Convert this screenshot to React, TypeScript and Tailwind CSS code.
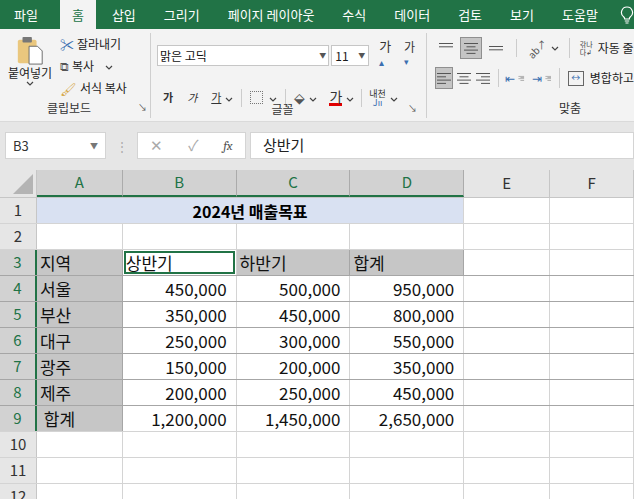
import React from 'react';

const font = { fontFamily: '"Malgun Gothic","Noto Sans CJK KR","Noto Sans",sans-serif' };

const tabs = ['파일', '홈', '삽입', '그리기', '페이지 레이아웃', '수식', '데이터', '검토', '보기', '도움말'];

const cols = [
  { k: 'A', w: 86 },
  { k: 'B', w: 114 },
  { k: 'C', w: 114 },
  { k: 'D', w: 114 },
  { k: 'E', w: 86 },
  { k: 'F', w: 84 },
];

const data: [string, string, string, string][] = [
  ['서울', '450,000', '500,000', '950,000'],
  ['부산', '350,000', '450,000', '800,000'],
  ['대구', '250,000', '300,000', '550,000'],
  ['광주', '150,000', '200,000', '350,000'],
  ['제주', '200,000', '250,000', '450,000'],
  [' 합계', '1,200,000', '1,450,000', '2,650,000'],
];

function Chevron() {
  return (
    <svg width="8" height="5" viewBox="0 0 8 5" className="inline-block">
      <path d="M1 1l3 3 3-3" stroke="#444" strokeWidth="1.2" fill="none" />
    </svg>
  );
}

function Lines({ kind }: { kind: 'l' | 'c' | 'r' | 'h' }) {
  const rows = kind === 'h' ? [0, 1] : [0, 1, 2, 3];
  return (
    <svg width="16" height="14" viewBox="0 0 16 14">
      {rows.map((i) => {
        const long = i % 2 === 0;
        const w = long ? 14 : 9;
        const x = kind === 'l' ? 1 : kind === 'r' ? 15 - w : (16 - w) / 2;
        return <rect key={i} x={kind === 'h' ? 1 : x} y={2 + i * 3.3} width={kind === 'h' ? 14 : w} height="1" fill="#555" />;
      })}
    </svg>
  );
}

function GroupLabel({ text, launcher }: { text: string; launcher?: boolean }) {
  return (
    <div className="h-[20px] flex items-center text-[12px] text-[#333] shrink-0">
      <span className="flex-1 text-center">{text}</span>
      {launcher && <span className="text-[9px] text-[#555] pr-[3px]">↘</span>}
    </div>
  );
}

function Ribbon() {
  return (
    <div className="h-[93px] bg-[#f3f3f3] flex border-b border-[#dadada] pt-[4px] pb-[3px]" style={font}>
      {/* clipboard */}
      <div className="w-[151px] flex flex-col border-r border-[#cfcfcf]">
        <div className="flex h-[66px] overflow-hidden">
          <div className="w-[60px] flex flex-col items-center pt-[2px]">
            <svg width="30" height="30" viewBox="0 0 30 32">
              <rect x="2" y="5" width="20" height="25" rx="2" fill="#eac77e" />
              <rect x="7" y="2" width="10" height="6" rx="1" fill="#777" />
              <path d="M14 12h9l5 5v14H14z" fill="#fff" stroke="#666" />
            </svg>
            <div className="text-[12px] text-[#222] leading-[16px]">붙여넣기</div>
            <Chevron />
          </div>
          <div className="flex flex-col text-[12px] text-[#222] pt-[2px] gap-[4px]">
            <div className="flex items-center gap-[3px]"><span className="text-[#3b6fb0] text-[14px] leading-none">✂</span>잘라내기</div>
            <div className="flex items-center gap-[3px]"><span className="text-[#555] text-[12px] leading-none">⧉</span>복사 <span className="ml-2"><Chevron /></span></div>
            <div className="flex items-center gap-[3px]"><span className="text-[#d6a84a] text-[13px] leading-none">🖌</span>서식 복사</div>
          </div>
        </div>
        <div className="mt-auto"><GroupLabel text="클립보드" launcher /></div>
      </div>
      {/* font */}
      <div className="w-[276px] flex flex-col border-r border-[#cfcfcf] px-[6px]">
        <div className="h-[66px]">
          <div className="flex items-center gap-[2px] pt-[3px]">
            <div className="w-[173px] h-[21px] bg-white border border-[#c6c6c6] flex items-center px-[2px] text-[12px] text-[#111]">
              <span className="flex-1">맑은 고딕</span>
              <span className="text-[7px] text-[#555]">▼</span>
            </div>
            <div className="w-[38px] h-[21px] bg-white border border-[#c6c6c6] flex items-center px-[3px] text-[12px]">
              <span className="flex-1 text-[#1a1a1a]">11</span>
              <span className="text-[7px] text-[#555]">▼</span>
            </div>
            <span className="ml-[8px] text-[13px] text-[#333]">가<sup className="text-[#3b6fb0]">▴</sup></span>
            <span className="ml-[6px] text-[12px] text-[#333]">가<sup className="text-[#3b6fb0]">▾</sup></span>
          </div>
          <div className="flex items-center pt-[9px] text-[11px] text-[#333] h-[36px]">
            <span className="ml-[6px] font-bold">가</span>
            <span className="ml-[14px] italic">가</span>
            <span className="ml-[14px] underline">가</span>
            <span className="ml-[4px]"><Chevron /></span>
            <span className="w-px h-[18px] bg-[#ccc] mx-[8px]" />
            <span className="w-[13px] h-[13px] border border-dotted border-[#777]" />
            <span className="ml-[6px]"><Chevron /></span>
            <span className="w-px h-[18px] bg-[#ccc] mx-[8px]" />
            <span className="text-[14px] text-[#555]">⬙</span>
            <span className="ml-[4px]"><Chevron /></span>
            <span className="ml-[12px] text-[14px] border-b-[3px] border-[#e00000] leading-[14px]">가</span>
            <span className="ml-[4px]"><Chevron /></span>
            <span className="w-px h-[18px] bg-[#ccc] mx-[7px]" />
            <span className="text-[9px] leading-[9px] text-center">내천<br /><span className="text-[#3b6fb0]">Jıı</span></span>
            <span className="ml-[4px]"><Chevron /></span>
          </div>
        </div>
        <div className="mt-auto"><GroupLabel text="글꼴" launcher /></div>
      </div>
      {/* alignment */}
      <div className="flex-1 flex flex-col pl-[8px] overflow-hidden">
        <div className="h-[66px]">
          <div className="flex items-center pt-[4px] gap-[3px]">
            <span className="w-[22px] h-[22px] flex items-center justify-center"><Lines kind="h" /></span>
            <span className="w-[22px] h-[22px] flex items-center justify-center bg-[#c5c5c5] border border-[#8f8f8f]"><Lines kind="c" /></span>
            <span className="w-[22px] h-[22px] flex items-center justify-center pt-[6px]"><Lines kind="h" /></span>
            <span className="w-px h-[18px] bg-[#ccc] mx-[6px]" />
            <span className="text-[10px] text-[#555] -rotate-45 whitespace-nowrap">ab↗</span>
            <Chevron />
            <span className="w-px h-[20px] bg-[#ccc] mx-[7px]" />
            <span className="text-[7px] leading-[8px] text-[#444] whitespace-nowrap">갂나<br />다↲</span>
            <span className="text-[12px] text-[#222] ml-[2px] whitespace-nowrap">자동 줄</span>
          </div>
          <div className="flex items-center pt-[8px] gap-[3px]">
            <span className="w-[22px] h-[22px] flex items-center justify-center bg-[#c5c5c5] border border-[#8f8f8f]"><Lines kind="l" /></span>
            <span className="w-[22px] h-[22px] flex items-center justify-center"><Lines kind="c" /></span>
            <span className="w-[22px] h-[22px] flex items-center justify-center"><Lines kind="r" /></span>
            <span className="w-px h-[18px] bg-[#ccc] mx-[4px]" />
            <span className="text-[12px] text-[#3b6fb0]">⇤</span><Lines kind="r" />
            <span className="text-[12px] text-[#3b6fb0] ml-[4px]">⇥</span><Lines kind="r" />
            <span className="w-px h-[20px] bg-[#ccc] mx-[5px]" />
            <span className="w-[16px] h-[15px] border border-[#666] flex items-center justify-center text-[9px] text-[#3b6fb0] shrink-0">↔</span>
            <span className="text-[12px] text-[#222] ml-[3px] whitespace-nowrap">병합하고</span>
          </div>
        </div>
        <div className="mt-auto h-[20px] flex items-center text-[12px] text-[#333] pl-[124px]">맞춤</div>
      </div>
    </div>
  );
}

export default function App() {
  return (
    <div className="w-[634px] h-[499px] overflow-hidden bg-[#e6e6e6] relative" style={font}>
      <div className="h-[29px] bg-[#217346] flex items-end text-[13px] text-white">
        {tabs.map((t, i) => (
          <div
            key={t}
            className={
              i === 1
                ? 'h-[29px] px-[12px] ml-[8px] mr-[2px] bg-[#f3f3f3] text-[#217346] flex items-center'
                : 'h-[29px] px-[12px] mx-[2px] flex items-center whitespace-nowrap'
            }
          >
            {t}
          </div>
        ))}
        <div className="h-[29px] flex items-center ml-[8px]">
          <svg width="14" height="18" viewBox="0 0 14 18">
            <path d="M7 1a5.5 5.5 0 0 0-3.2 10c.6.5.9 1.2.9 2h4.6c0-.8.3-1.5.9-2A5.5 5.5 0 0 0 7 1z" stroke="#fff" strokeWidth="1.2" fill="none" />
            <path d="M4.8 15h4.4M5.5 17h3" stroke="#fff" strokeWidth="1.2" />
          </svg>
        </div>
      </div>
      <Ribbon />
      <div className="h-[9px]" />
      <div className="h-[29px] flex items-center text-[13px]">
        <div className="ml-[5px] w-[101px] h-[27px] bg-white border border-[#d4d4d4] flex items-center px-[7px] text-[#333]">
          <span className="flex-1">B3</span>
          <span className="text-[8px] text-[#777]">▼</span>
        </div>
        <div className="w-[31px] text-center text-[#aaa] text-[12px]">⋮</div>
        <div className="w-[109px] h-[27px] bg-white border border-[#d4d4d4] flex items-center justify-around text-[#aaa] text-[15px]">
          <span>✕</span>
          <span>✓</span>
          <span className="italic font-serif text-[#555] text-[13px]">fx</span>
        </div>
        <div className="ml-[4px] flex-1 h-[27px] bg-white border border-[#d4d4d4] flex items-center px-[12px] text-[15px] text-[#222]">
          상반기
        </div>
      </div>
      <div className="h-[10px]" />
      {/* grid */}
      <div className="bg-white">
        <div className="flex h-[28px] bg-[#e6e6e6] border-b border-[#c6c6c6]">
          <div className="w-[37px] border-r border-[#c6c6c6] flex items-end justify-end p-[3px]">
            <svg width="20" height="20" viewBox="0 0 20 20"><path d="M20 0v20H0z" fill="#b4b4b4" /></svg>
          </div>
          {cols.map((c, i) => (
            <div
              key={c.k}
              style={{ width: c.w }}
              className={
                i <= 3
                  ? 'border-r border-[#ababab] bg-[#d2d2d2] text-[#217346] flex items-center justify-center text-[15px] border-b-2 border-b-[#217346]'
                  : 'border-r border-[#c6c6c6] text-[#333] flex items-center justify-center text-[15px]'
              }
            >
              {c.k}
            </div>
          ))}
        </div>
        {Array.from({ length: 12 }).map((_, r) => {
          const row = r + 1;
          const inSel = row >= 3 && row <= 9;
          let cells: React.ReactNode[] = [];
          if (row === 1) {
            cells = [
              <div key="t" style={{ width: 428 }} className="bg-[#d9e1f2] border-r border-[#d4d4d4] flex items-center justify-center font-bold text-[16px] text-black">
                2024년 매출목표
              </div>,
              ...cols.slice(4).map((c) => <div key={c.k} style={{ width: c.w }} className="border-r border-[#d4d4d4]" />),
            ];
          } else {
            cells = cols.map((c, i) => {
              let txt = '';
              let gray = false;
              let right = false;
              if (row === 3 && i <= 3) {
                txt = ['지역', '상반기', '하반기', '합계'][i];
                gray = i !== 1;
              }
              if (row >= 4 && row <= 9 && i <= 3) {
                txt = data[row - 4][i];
                gray = i === 0;
                right = i > 0;
              }
              const selected = row === 3 && i === 1;
              return (
                <div
                  key={c.k}
                  style={{ width: c.w }}
                  className={
                    'relative flex items-center text-[17px] text-[#111] whitespace-pre border-r ' +
                    (gray ? 'bg-[#c6c6c6] border-[#a6a6a6] ' : 'border-[#d4d4d4] ') +
                    (right ? 'justify-end pr-[9px] ' : 'pl-[3px] ')
                  }
                >
                  {selected && <div className="absolute inset-[1px] border-2 border-[#217346] pointer-events-none" />}
                  <span className="relative">{txt}</span>
                </div>
              );
            });
          }
          return (
            <div
              key={row}
              className={
                'flex h-[26px] border-b ' +
                (row >= 3 && row <= 8 ? 'border-[#a6a6a6]' : 'border-[#d4d4d4]')
              }
            >
              <div
                className={
                  'w-[37px] flex items-center justify-center text-[15px] border-r ' +
                  (inSel
                    ? 'bg-[#d2d2d2] text-[#217346] border-r-2 border-r-[#217346]'
                    : 'bg-[#e6e6e6] text-[#333] border-[#c6c6c6]')
                }
              >
                {row}
              </div>
              {cells}
            </div>
          );
        })}
      </div>
    </div>
  );
}
